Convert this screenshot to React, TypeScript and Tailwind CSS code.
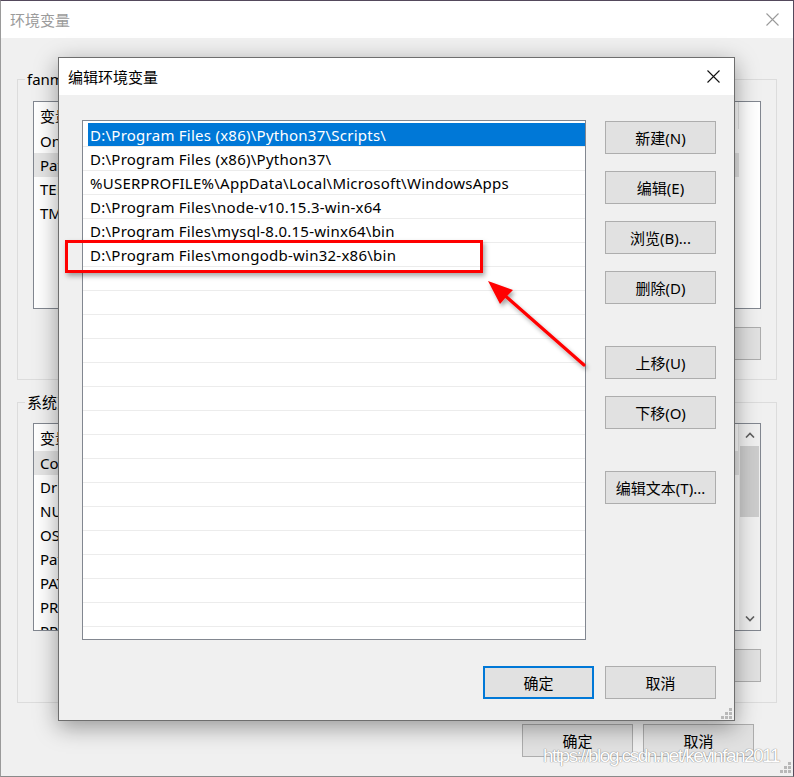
import React from "react";

const rows = [
  "D:\\Program Files (x86)\\Python37\\Scripts\\",
  "D:\\Program Files (x86)\\Python37\\",
  "%USERPROFILE%\\AppData\\Local\\Microsoft\\WindowsApps",
  "D:\\Program Files\\node-v10.15.3-win-x64",
  "D:\\Program Files\\mysql-8.0.15-winx64\\bin",
  "D:\\Program Files\\mongodb-win32-x86\\bin",
];

function Btn({ children, primary = false }: { children: React.ReactNode; primary?: boolean }) {
  return (
    <div
      className={
        primary
          ? "flex h-[33px] w-[111px] shrink-0 items-center justify-center border-2 border-[#0078d7] bg-[#e1e1e1] text-[15px] leading-[20px] text-black"
          : "flex h-[33px] w-[111px] shrink-0 items-center justify-center border border-[#adadad] bg-[#e1e1e1] text-[15px] leading-[20px] text-black"
      }
    >
      {children}
    </div>
  );
}

function CloseX({ color }: { color: string }) {
  return (
    <svg width="13" height="13" viewBox="0 0 13 13" className="shrink-0">
      <path d="M0.5 0.5 L12.5 12.5 M12.5 0.5 L0.5 12.5" stroke={color} strokeWidth="1.1" fill="none" />
    </svg>
  );
}

function Grip() {
  const pts = [
    [8, 0],
    [4, 4],
    [8, 4],
    [0, 8],
    [4, 8],
    [8, 8],
  ];
  return (
    <svg width="11" height="11" viewBox="0 0 11 11">
      {pts.map(([x, y], i) => (
        <rect key={i} x={x} y={y} width="3" height="3" fill="#b8b8b8" />
      ))}
    </svg>
  );
}

function Chevron({ up }: { up: boolean }) {
  return (
    <svg width="10" height="6" viewBox="0 0 10 6">
      <path
        d={up ? "M1 5.5 L5 1.5 L9 5.5" : "M1 0.5 L5 4.5 L9 0.5"}
        stroke="#606060"
        strokeWidth="1.6"
        fill="none"
      />
    </svg>
  );
}

function OuterList({
  items,
  selected,
  scrollbar,
}: {
  items: string[];
  selected: number;
  scrollbar: boolean;
}) {
  return (
    <div className="flex h-[208px] w-full overflow-hidden border border-[#828790] bg-white">
      <div className="flex flex-1 flex-col overflow-hidden">
        <div className="flex h-[27px] w-[705px] shrink-0 items-center">
          <div className="w-[300px] pl-[6px] text-[15px] leading-[20px]">变量</div>
          <div className="flex-1 pl-[6px] text-[15px] leading-[20px]">值</div>
          <div className="h-[27px] w-px bg-[#e5e5e5]" />
        </div>
        {items.map((it, i) => (
          <div
            key={i}
            className={
              i === selected
                ? "flex h-[24px] w-[705px] shrink-0 items-center bg-[#e5e5e5] pl-[6px] text-[15px] leading-[20px] whitespace-nowrap"
                : "flex h-[24px] w-[705px] shrink-0 items-center pl-[6px] text-[15px] leading-[20px] whitespace-nowrap"
            }
          >
            {it}
          </div>
        ))}
      </div>
      {scrollbar ? (
        <div className="flex w-[21px] shrink-0 flex-col items-center bg-[#f0f0f0]">
          <div className="flex h-[22px] items-center justify-center">
            <Chevron up />
          </div>
          <div className="h-[71px] w-[19px] bg-[#cdcdcd]" />
          <div className="flex-1" />
          <div className="flex h-[22px] items-center justify-center">
            <Chevron up={false} />
          </div>
        </div>
      ) : null}
    </div>
  );
}

export default function App() {
  const emptyRows = Array.from({ length: 16 });
  return (
    <div className="relative h-[777px] w-[794px] overflow-hidden bg-[#f0f0f0] font-['Noto_Sans','Noto_Sans_CJK_SC',sans-serif] text-black">
      {/* Outer window */}
      <div className="flex h-[777px] w-[794px] flex-col border-t border-r border-b border-l border-t-[#54495c] border-r-[#54495c] border-l-[#9a9a9a] border-b-[#8a8a8a]">
        <div className="flex h-[37px] shrink-0 items-center justify-between bg-white pl-[9px] pr-[14px]">
          <span className="text-[15px] leading-[20px] text-[#9b9b9b]">环境变量</span>
          <CloseX color="#9a9a9a" />
        </div>
        <div className="flex flex-1 flex-col px-[16px]">
          <fieldset className="mt-[31px] border border-[#dcdcdc] px-[15px] pt-[12px] pb-[19px]">
            <legend className="-ml-[8px] px-[2px] text-[15px] leading-[20px]">fanmin 的用户变量(U)</legend>
            <OuterList items={["OneDrive", "Path", "TEMP", "TMP"]} selected={1} scrollbar={false} />
            <div className="mt-[18px] flex justify-end gap-[10px]">
              <Btn>新建(N)...</Btn>
              <Btn>编辑(E)...</Btn>
              <Btn>删除(D)</Btn>
            </div>
          </fieldset>
          <fieldset className="mt-[12px] border border-[#dcdcdc] px-[15px] pt-[11px] pb-[20px]">
            <legend className="-ml-[8px] px-[2px] text-[15px] leading-[20px]">系统变量(S)</legend>
            <OuterList
              items={[
                "ComSpec",
                "DriverData",
                "NUMBER_OF_PROCESSORS",
                "OS",
                "Path",
                "PATHEXT",
                "PROCESSOR_ARCHITECTURE",
                "PROCESSOR_IDENTIFIER",
              ]}
              selected={0}
              scrollbar
            />
            <div className="mt-[18px] flex justify-end gap-[10px]">
              <Btn>新建(W)...</Btn>
              <Btn>编辑(I)...</Btn>
              <Btn>删除(L)</Btn>
            </div>
          </fieldset>
          <div className="mt-[21px] flex justify-end gap-[10px] pr-[23px]">
            <Btn>确定</Btn>
            <Btn>取消</Btn>
          </div>
        </div>
      </div>

      {/* Outer resize grip */}
      <div className="absolute left-[780px] top-[762px]">
        <Grip />
      </div>

      {/* Watermark */}
      <div className="absolute left-[543px] top-[744px] font-['Liberation_Sans',Arial,sans-serif] text-[19px] leading-[24px] tracking-[-1.5px] text-white [text-shadow:0_0_1px_#8a8a8a,0_0_1px_#8a8a8a]">
        https://blog.csdn.net/kevinfan2011
      </div>

      {/* Inner dialog */}
      <div className="absolute left-[58px] top-[57px] flex h-[664px] w-[677px] flex-col border border-[#6e6e6e] bg-[#f0f0f0] shadow-[0_6px_22px_rgba(0,0,0,0.38)]">
        <div className="flex h-[37px] shrink-0 items-center justify-between bg-white pl-[9px] pr-[14px]">
          <span className="text-[15px] leading-[20px]">编辑环境变量</span>
          <CloseX color="#111111" />
        </div>
        <div className="flex flex-1 flex-col pl-[23px] pr-[18px] pt-[25px]">
          <div className="flex gap-[19px]">
            <div className="flex h-[520px] w-[504px] flex-col overflow-hidden border border-[#828790] bg-white pt-[2px]">
              {rows.map((r, i) => (
                <div key={i} className="flex h-[24px] shrink-0 border-b border-[#ececec]">
                  <div
                    className={
                      i === 0
                        ? "ml-[5px] flex flex-1 items-center bg-[#0078d7] pl-[2px] text-[15px] leading-[20px] tracking-[0.25px] whitespace-nowrap text-white"
                        : "ml-[5px] flex flex-1 items-center pl-[2px] text-[15px] leading-[20px] tracking-[0.25px] whitespace-nowrap text-black"
                    }
                  >
                    {r}
                  </div>
                </div>
              ))}
              {emptyRows.map((_, i) => (
                <div key={"e" + i} className="h-[24px] shrink-0 border-b border-[#ececec]" />
              ))}
            </div>
            <div className="flex flex-col pt-[1px]">
              <Btn>新建(N)</Btn>
              <div className="mt-[17px]">
                <Btn>编辑(E)</Btn>
              </div>
              <div className="mt-[17px]">
                <Btn>浏览(B)...</Btn>
              </div>
              <div className="mt-[17px]">
                <Btn>删除(D)</Btn>
              </div>
              <div className="mt-[42px]">
                <Btn>上移(U)</Btn>
              </div>
              <div className="mt-[17px]">
                <Btn>下移(O)</Btn>
              </div>
              <div className="mt-[42px]">
                <Btn>编辑文本(T)...</Btn>
              </div>
            </div>
          </div>
          <div className="mt-[26px] flex justify-end gap-[11px]">
            <Btn primary>确定</Btn>
            <Btn>取消</Btn>
          </div>
        </div>
        <div className="absolute bottom-[1px] right-[2px]">
          <Grip />
        </div>
      </div>

      {/* Red highlight rectangle */}
      <div className="absolute left-[65px] top-[240px] h-[33px] w-[418px] border-[3px] border-[#ff0000] shadow-[2px_3px_5px_rgba(0,0,0,0.35)]" />

      {/* Red arrow */}
      <svg className="pointer-events-none absolute left-0 top-0" width="794" height="777" viewBox="0 0 794 777">
        <defs>
          <filter id="sh" x="-20%" y="-20%" width="140%" height="140%">
            <feDropShadow dx="2" dy="3" stdDeviation="2" floodColor="#000" floodOpacity="0.35" />
          </filter>
        </defs>
        <g filter="url(#sh)">
          <line x1="584" y1="365" x2="502" y2="293" stroke="#ff0000" strokeWidth="3.2" strokeLinecap="round" />
          <polygon points="488,281 513,290 507,296 500,304" fill="#ff0000" />
        </g>
      </svg>
    </div>
  );
}
